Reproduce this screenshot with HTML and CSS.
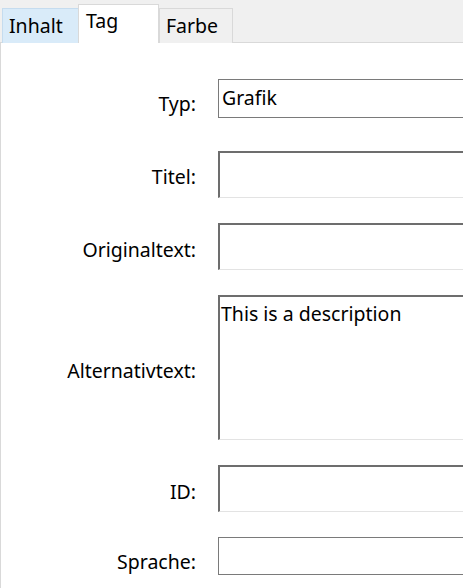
FILE: index.html
```html
<!DOCTYPE html>
<html>
<head>
<meta charset="utf-8">
<link rel="stylesheet" href="styles.css">
</head>
<body>
<div class="tabbar">
  <div class="tab tab-hover">Inhalt</div>
  <div class="tab tab-active">Tag</div>
  <div class="tab">Farbe</div>
</div>
<div class="panel">
  <div class="form">
    <label class="lbl lbl-typ">Typ:</label>
    <div class="combo">Grafik</div>

    <label class="lbl lbl-titel">Titel:</label>
    <div class="field field-titel"></div>

    <label class="lbl">Originaltext:</label>
    <div class="field"></div>

    <label class="lbl">Alternativtext:</label>
    <div class="field area">This is a description</div>

    <label class="lbl">ID:</label>
    <div class="field"></div>

    <label class="lbl lbl-lang">Sprache:</label>
    <div class="combo combo-lang"></div>
  </div>
</div>
</body>
</html>
```
FILE: styles.css
```css
html, body {
  margin: 0;
  padding: 0;
  background: #ffffff;
  overflow: hidden;
  width: 463px;
  height: 588px;
}
body {
  font-family: "Noto Sans", "Open Sans", sans-serif;
  font-size: 19.5px;
  color: #000;
}
.tabbar {
  height: 43px;
  background: #f0f0f0;
  border-bottom: 1px solid #d9d9d9;
  box-sizing: border-box;
  display: flex;
  align-items: flex-end;
  padding-left: 2px;
}
.tab {
  box-sizing: border-box;
  height: 35px;
  padding: 3px 0 0 6px;
  border: 1px solid #d9d9d9;
  border-bottom: none;
  background: #f0f0f0;
  width: 74px;
  line-height: 28px;
  margin-bottom: -1px;
}
.tab-hover {
  width: 76px;
  background: #d9ebf9;
  border-color: #c5dcef;
  border-right: none;
}
.tab-active {
  width: 81px;
  height: 39px;
  background: #fff;
  padding-top: 2px;
  padding-left: 7px;
  margin-bottom: -1px;
  border-color: #d9d9d9;
}
.panel {
  border-left: 1px solid #d9d9d9;
  height: 545px;
  box-sizing: border-box;
}
.form {
  display: grid;
  grid-template-columns: 195px 1fr;
  column-gap: 22px;
  padding-top: 36px;
  row-gap: 25px;
}
.lbl {
  text-align: right;
  align-self: center;
  padding-top: 5px;
}
.lbl-typ { padding-top: 9px; }
.lbl-titel { margin-top: 6px; }
.lbl-lang { padding-top: 10px; }
.combo {
  box-sizing: border-box;
  height: 39px;
  border: 1px solid #7a7a7a;
  border-right: none;
  padding: 5px 0 0 3px;
  line-height: 26px;
}
.combo-lang {
  height: 38px;
}
.field {
  box-sizing: border-box;
  height: 47px;
  border-top: 2px solid #6d6d6d;
  border-left: 2px solid #6d6d6d;
  border-bottom: 1px solid #e3e3e3;
  padding: 2px 0 0 1px;
  line-height: 26px;
}
.field-titel { margin-top: 8px; }
.area {
  height: 145px;
  padding-top: 4px;
}
```
